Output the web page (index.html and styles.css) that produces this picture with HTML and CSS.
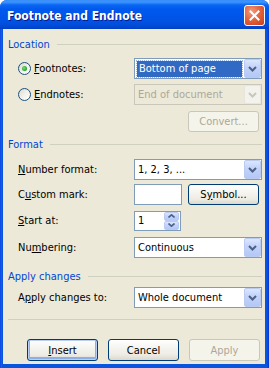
FILE: index.html
```html
<!DOCTYPE html>
<html lang="en">
<head>
    <meta charset="UTF-8">
    <title>Footnote and Endnote</title>
    <link rel="stylesheet" href="styles.css">
</head>
<body>

<div class="window">
    <div class="titlebar">
        <span class="title">Footnote and Endnote</span>
        <div class="close">
            <svg width="11" height="11" viewBox="0 0 11 11"><path d="M1.5 1.5 L9.5 9.5 M9.5 1.5 L1.5 9.5" stroke="#fff" stroke-width="2" stroke-linecap="square"/></svg>
        </div>
    </div>

    <div class="client">
        <div class="group-head head-location">Location</div>

        <div class="row row-foot">
            <div class="lab"><span class="radio on"></span><span><u>F</u>ootnotes:</span></div>
            <div class="combo">
                <span class="val"><span class="sel">Bottom of page</span></span>
                <span class="arrow"><svg width="9" height="6" viewBox="0 0 9 6"><path d="M1 1 L4.5 4.5 L8 1" fill="none" stroke="#4D6185" stroke-width="2"/></svg></span>
            </div>
        </div>

        <div class="row row-end">
            <div class="lab"><span class="radio"></span><span><u>E</u>ndnotes:</span></div>
            <div class="combo disabled">
                <span class="val">End of document</span>
                <span class="arrow"><svg width="9" height="6" viewBox="0 0 9 6"><path d="M1 1 L4.5 4.5 L8 1" fill="none" stroke="#C9C7BA" stroke-width="2"/></svg></span>
            </div>
        </div>

        <div class="row row-convert">
            <div class="btn disabled">Convert...</div>
        </div>

        <div class="group-head head-format">Format</div>

        <div class="row row-numfmt">
            <div class="lab"><span><u>N</u>umber format:</span></div>
            <div class="combo">
                <span class="val">1, 2, 3, ...</span>
                <span class="arrow"><svg width="9" height="6" viewBox="0 0 9 6"><path d="M1 1 L4.5 4.5 L8 1" fill="none" stroke="#4D6185" stroke-width="2"/></svg></span>
            </div>
        </div>

        <div class="row row-custom">
            <div class="lab"><span>C<u>u</u>stom mark:</span></div>
            <div class="textbox"></div>
            <div class="btn symbol">S<u>y</u>mbol...</div>
        </div>

        <div class="row row-start">
            <div class="lab"><span><u>S</u>tart at:</span></div>
            <div class="spin">
                <span class="val">1</span>
                <span class="spin-btns">
                    <span class="spin-up"><svg width="7" height="4" viewBox="0 0 7 4"><path d="M0.5 3.5 L3.5 0.8 L6.5 3.5" fill="none" stroke="#4D6185" stroke-width="1.6"/></svg></span>
                    <span class="spin-down"><svg width="7" height="4" viewBox="0 0 7 4"><path d="M0.5 0.5 L3.5 3.2 L6.5 0.5" fill="none" stroke="#4D6185" stroke-width="1.6"/></svg></span>
                </span>
            </div>
        </div>

        <div class="row row-numbering">
            <div class="lab"><span>Nu<u>m</u>bering:</span></div>
            <div class="combo">
                <span class="val">Continuous</span>
                <span class="arrow"><svg width="9" height="6" viewBox="0 0 9 6"><path d="M1 1 L4.5 4.5 L8 1" fill="none" stroke="#4D6185" stroke-width="2"/></svg></span>
            </div>
        </div>

        <div class="group-head head-apply">Apply changes</div>

        <div class="row row-applyto">
            <div class="lab"><span>A<u>p</u>ply changes to:</span></div>
            <div class="combo">
                <span class="val">Whole document</span>
                <span class="arrow"><svg width="9" height="6" viewBox="0 0 9 6"><path d="M1 1 L4.5 4.5 L8 1" fill="none" stroke="#4D6185" stroke-width="2"/></svg></span>
            </div>
        </div>

        <div class="separator"></div>

        <div class="buttons">
            <div class="btn default"><u>I</u>nsert</div>
            <div class="btn">Cancel</div>
            <div class="btn disabled">Apply</div>
        </div>
    </div>
</div>

</body>
</html>
```

FILE: styles.css
```css
* {
    box-sizing: border-box;
}
html, body {
    margin: 0;
    padding: 0;
}
body {
    background: #ffffff;
    font-family: "DejaVu Sans Condensed", "DejaVu Sans", sans-serif;
    font-size: 11px;
    color: #000;
}
u {
    text-decoration: underline;
    text-underline-offset: 1px;
}
.window {
    width: 269px;
    height: 368px;
    display: flex;
    flex-direction: column;
    background: linear-gradient(to right, #0831D9 0, #166AEE 1px, #0855DD 2px, #0A55E0 50%, #0855DD calc(100% - 2px), #0831D9 100%);
    border-radius: 7px 7px 0 0;
    overflow: hidden;
}
.titlebar {
    height: 29px;
    flex: none;
    display: flex;
    align-items: center;
    padding: 0 4px 0 7px;
    background: linear-gradient(to bottom, #3A8CF6 0, #3D95FF 2px, #0A66F2 5px, #0059EE 9px, #0055E8 17px, #0050DE 24px, #0047D0 27px, #0040C2 29px);
}
.title {
    color: #fff;
    font-family: "DejaVu Sans Condensed", "DejaVu Sans", sans-serif;
    font-weight: bold;
    font-size: 12px;
    text-shadow: 1px 1px 0 #0A1A8C;
    margin-top: 2px;
}
.close {
    margin-left: auto;
    width: 21px;
    height: 21px;
    margin-top: 2px;
    border: 1px solid #fff;
    border-radius: 3px;
    background: radial-gradient(circle at 35% 30%, #F19C80 0, #E3653F 45%, #C93A16 100%);
    display: flex;
    align-items: center;
    justify-content: center;
}
.client {
    flex: 1;
    background: #ECE9D8;
    margin: 0 4px 4px 3px;
    display: flex;
    flex-direction: column;
}
.group-head {
    display: flex;
    align-items: center;
    height: 14px;
    padding: 0 3px 0 5px;
    color: #0046D5;
}
.group-head::after {
    content: "";
    flex: 1;
    height: 1px;
    margin-left: 7px;
    background: #D0D0BF;
}
.head-location {
    margin-top: 8px;
}
.head-format {
    margin-top: 5px;
}
.head-apply {
    margin-top: 11px;
}
.row {
    display: flex;
    align-items: center;
    height: 21px;
    padding-left: 15px;
}
.row-foot {
    margin-top: 7px;
}
.row-end {
    margin-top: 5px;
}
.row-convert {
    margin-top: 6px;
    justify-content: flex-end;
    padding-right: 6px;
}
.row-numfmt {
    margin-top: 8px;
}
.row-custom {
    margin-top: 4px;
}
.row-start {
    margin-top: 5px;
}
.row-numbering {
    margin-top: 6px;
}
.row-applyto {
    margin-top: 4px;
}
.lab {
    width: 116px;
    display: flex;
    align-items: center;
}
.radio {
    width: 13px;
    height: 13px;
    border: 1px solid #1C5180;
    border-radius: 50%;
    background: linear-gradient(135deg, #DCD9CD 0, #F2F1EB 50%, #ffffff 100%);
    margin-right: 3px;
    display: flex;
    align-items: center;
    justify-content: center;
}
.radio.on::after {
    content: "";
    width: 5px;
    height: 5px;
    border-radius: 50%;
    background: radial-gradient(circle at 40% 40%, #7FE07F 0, #21A121 70%);
}
.combo {
    width: 128px;
    height: 21px;
    border: 1px solid #7F9DB9;
    background: #fff;
    display: flex;
    align-items: center;
}
.combo .val {
    flex: 1;
    padding-left: 3px;
    white-space: nowrap;
}
.combo .sel {
    display: block;
    margin-left: -1px;
    margin-right: 2px;
    background: #316AC5;
    color: #fff;
    padding: 1px 1px 2px 2px;
    outline: 1px dotted #9CB4E0;
}
.arrow {
    width: 17px;
    height: 19px;
    border: 1px solid #B9CBF3;
    border-radius: 2px;
    background: linear-gradient(to bottom, #DCE6FD 0, #C3D3FB 40%, #B4C8F6 100%);
    display: flex;
    align-items: center;
    justify-content: center;
}
.combo.disabled {
    border-color: #C9C7BA;
    background: #ECE9D8;
    color: #ACA899;
}
.combo.disabled .arrow {
    border-color: #E8E6DC;
    background: #F3F2EC;
}
.textbox {
    width: 48px;
    height: 21px;
    border: 1px solid #7F9DB9;
    background: #fff;
}
.btn {
    width: 71px;
    height: 21px;
    border: 1px solid #003C74;
    border-radius: 3px;
    background: linear-gradient(to bottom, #FFFFFF 0, #F5F4EF 40%, #ECEBE4 75%, #DCD8CB 100%);
    display: flex;
    align-items: center;
    justify-content: center;
}
.btn.symbol {
    margin-left: 6px;
}
.btn.disabled {
    border-color: #C9C7BA;
    background: #F5F4EA;
    color: #ACA899;
}
.btn.default {
    box-shadow: inset 0 0 0 1px #B8D0F5, inset 0 -1px 0 2px #8FAEE8;
}
.spin {
    width: 47px;
    height: 20px;
    border: 1px solid #7F9DB9;
    background: #fff;
    display: flex;
    align-items: center;
}
.spin .val {
    flex: 1;
    padding-left: 3px;
}
.spin-btns {
    width: 15px;
    height: 18px;
    display: flex;
    flex-direction: column;
    margin-right: 1px;
}
.spin-up, .spin-down {
    flex: 1;
    border: 1px solid #B9CBF3;
    border-radius: 2px;
    background: linear-gradient(to bottom, #DCE6FD 0, #C3D3FB 40%, #B4C8F6 100%);
    display: flex;
    align-items: center;
    justify-content: center;
}
.separator {
    height: 1px;
    margin: 11px 3px 0 5px;
    background: #D0D0BF;
}
.buttons {
    display: flex;
    gap: 10px;
    padding-left: 24px;
    margin-top: 19px;
}
.buttons .btn {
    height: 22px;
}
```
